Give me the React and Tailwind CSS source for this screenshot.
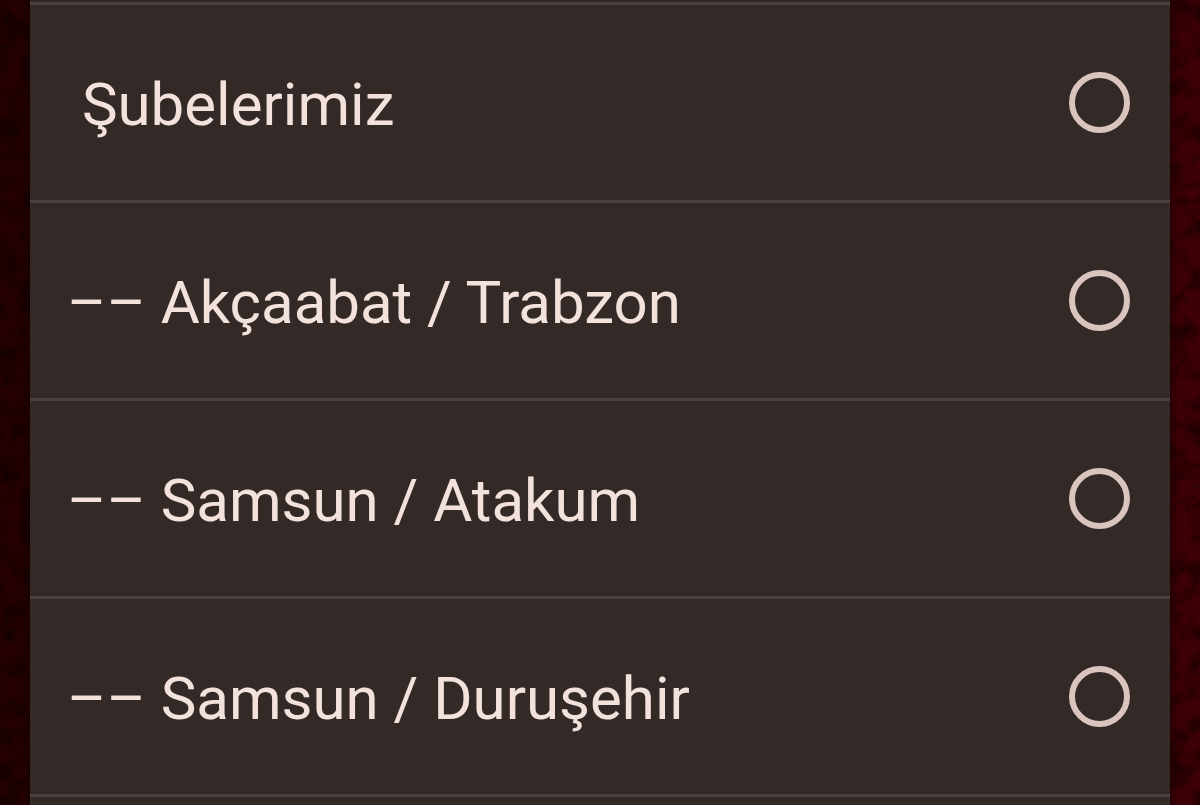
import React from 'react'

const branches = [
  { id: "subelerimiz", label: " Şubelerimiz" },
  { id: "akcaabat", label: "–– Akçaabat / Trabzon" },
  { id: "atakum", label: "–– Samsun / Atakum" },
  { id: "durusehir", label: "–– Samsun / Duruşehir" },
]

const BranchOption = ({ id, label }) => {
  return (
    <li className="h-[198px] border-t-3 border-[#4b403e]">
      <label
        htmlFor={id}
        className="flex h-full items-center justify-between pl-[37px] pr-10 cursor-pointer"
      >
        <span className="whitespace-pre pt-1">{label}</span>
        <input
          id={id}
          type="radio"
          name="branch"
          value={id}
          className="
            size-[61px] shrink-0 appearance-none rounded-full
            border-6 border-[#dac4be] checked:bg-[#dac4be]
          "
        />
      </label>
    </li>
  )
}

// Dark red leather that shows on both sides of the list
const Leather = ({ id, base, edge, seed }) => {
  return (
    <svg className="w-[30px] shrink-0 self-stretch" aria-hidden="true">
      <filter id={id} x="0" y="0" width="100%" height="100%" colorInterpolationFilters="sRGB">
        <feTurbulence type="fractalNoise" baseFrequency="0.05" numOctaves="4" seed={seed} />
        <feColorMatrix values="0 0 0 0 0.03  0 0 0 0 0  0 0 0 0 0  3 0 0 0 -1.3" />
      </filter>
      <linearGradient id={`${id}-shade`} x1={edge === "right" ? 0 : 1} x2={edge === "right" ? 1 : 0}>
        <stop offset="0.7" stopColor="#0e0000" stopOpacity="0" />
        <stop offset="1" stopColor="#0e0000" stopOpacity="0.4" />
      </linearGradient>
      <rect width="100%" height="100%" fill={base} />
      <rect width="100%" height="100%" filter={`url(#${id})`} opacity="0.5" />
      <rect width="100%" height="100%" fill={`url(#${id}-shade)`} />
    </svg>
  )
}

const App = () => {
  return (
    <div className="flex min-h-screen bg-[#200002]">
      <Leather id="leather-left" base="#240002" edge="right" seed="3" />
      <main className="flex-1 bg-[#332927] pt-0.5 font-['Roboto',sans-serif] text-[60px] leading-[72px] text-[#f3e2dc]">
        <ul className="border-b-3 border-[#4b403e]">
          {branches.map((branch) => (
            <BranchOption key={branch.id} id={branch.id} label={branch.label} />
          ))}
        </ul>
      </main>
      <Leather id="leather-right" base="#3d0005" edge="left" seed="8" />
    </div>
  )
}

export default App
